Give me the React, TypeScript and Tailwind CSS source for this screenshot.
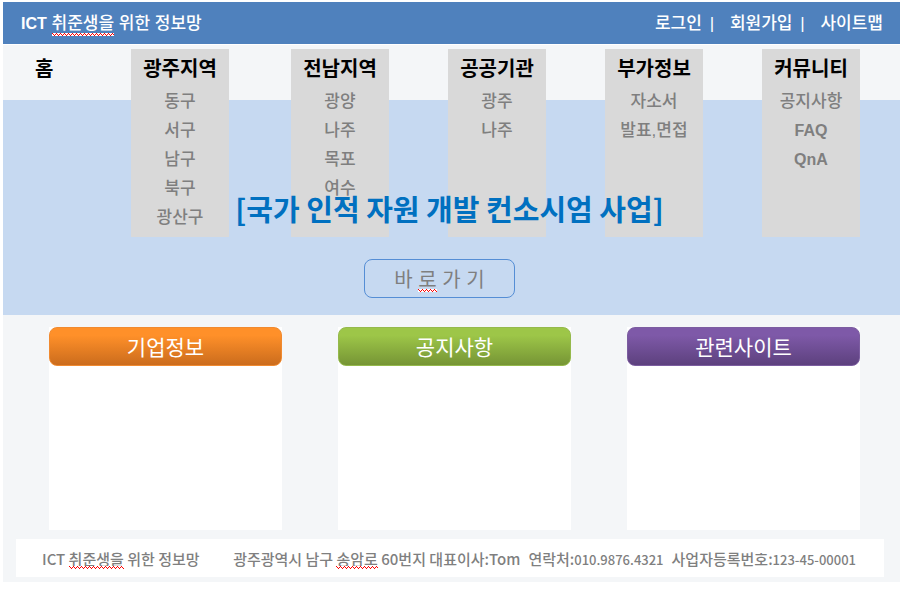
import React from "react";

type Menu = { title: string; items: string[]; className: string };

const menus: Menu[] = [
  { title: "광주지역", items: ["동구", "서구", "남구", "북구", "광산구"], className: "mr-auto" },
  { title: "전남지역", items: ["광양", "나주", "목포", "여수"], className: "" },
  { title: "공공기관", items: ["광주", "나주"], className: "" },
  { title: "부가정보", items: ["자소서", "발표,면접"], className: "" },
  { title: "커뮤니티", items: ["공지사항", "FAQ", "QnA"], className: "" },
];

const cards = [
  { title: "기업정보", tone: "border-[#f08a30] from-[#ff9029] to-[#cb6c1d]" },
  { title: "공지사항", tone: "border-[#95b94c] from-[#9dc648] to-[#769535]" },
  { title: "관련사이트", tone: "border-[#7c5da0] from-[#7e59a8] to-[#5d417e]" },
];

/* A word with the red zigzag of a spelling check under it, built from three one-pixel rows. */
function Misspelled({ children }: { children: React.ReactNode }) {
  return (
    <span className="relative inline-block">
      {children}
      <span aria-hidden="true" className="absolute inset-x-0 bottom-0 h-[3px]">
        <span className="block h-px bg-[linear-gradient(90deg,#f00_25%,#fff_25%)] bg-size-[4px_1px]" />
        <span className="block h-px bg-[linear-gradient(90deg,#fff_50%,#f00_50%)] bg-size-[2px_1px]" />
        <span className="block h-px bg-[linear-gradient(90deg,#fff_50%,#f00_50%,#f00_75%,#fff_75%)] bg-size-[4px_1px]" />
      </span>
    </span>
  );
}

export default function App() {
  return (
    <div className="bg-white px-[3px] pt-[2px] pr-[2px] font-['Liberation_Sans','Noto_Sans_CJK_KR',sans-serif]">
      <header>
        <div className="flex h-[42px] items-center justify-between bg-[#4f81bd] pt-0.5 pr-[17px] pl-[18px] text-[17px] leading-6 font-medium text-white">
          <p>
            <span className="text-base font-bold">ICT</span> <Misspelled>취준생을</Misspelled> 위한 정보망
          </p>
          <div className="flex items-center">
            <a href="#login">로그인</a>
            <span className="w-7 pr-2 text-center">|</span>
            <a href="#join">회원가입</a>
            <span className="w-7 pr-2 text-center">|</span>
            <a href="#sitemap">사이트맵</a>
          </div>
        </div>
        <nav className="mt-px flex h-[55px] bg-[#f4f6f8] pt-1 pr-10 text-xl leading-10 font-bold text-black">
          <a href="#home" className="w-32 shrink-0 pl-8">홈</a>
          <ul className="flex flex-1 gap-[59px]">
            {menus.map((menu) => (
              <li key={menu.title} className={`relative h-[38px] w-[98px] shrink-0 bg-[#d9d9d9] text-center ${menu.className}`}>
                <a href="#menu" className="whitespace-nowrap">{menu.title}</a>
                <ul className="absolute inset-x-0 top-full z-10 h-[150px] bg-[#d9d9d9] text-[17px] leading-[29px] font-medium text-[#7f7f7f]">
                  {menu.items.map((item) => (
                    <li key={item} className="h-[29px]">
                      <a href="#item" className={/^[A-Z]/.test(item) ? "text-base leading-[29px] font-bold" : ""}>{item}</a>
                    </li>
                  ))}
                </ul>
              </li>
            ))}
          </ul>
        </nav>
      </header>

      <main className="bg-[#f4f6f8]">
        <section className="flex h-[215px] flex-col items-center bg-[#c6d9f1] pt-[88px]">
          <h1 className="relative z-20 pr-1 font-['Noto_Sans_CJK_KR',sans-serif] text-[29px] leading-10 font-bold whitespace-nowrap text-[#0070c0]">
            [국가 인적 자원 개발 컨소시엄 사업]
          </h1>
          <button type="button" className="mt-[31px] mr-6 h-[39px] w-[151px] rounded-lg border border-[#558ed5] pt-0.5 text-xl leading-6 text-[#7f7f7f]">
            바 <Misspelled>로</Misspelled> 가 기
          </button>
        </section>

        <div className="grid grid-cols-3 gap-14 pt-3 pr-10 pl-[46px]">
          {cards.map((card) => (
            <section key={card.title} className="h-[203px] bg-white">
              <h2 className={`h-[39px] rounded-lg border bg-linear-to-b from-20% text-center text-[21px] leading-10 text-white ${card.tone}`}>
                {card.title}
              </h2>
            </section>
          ))}
        </div>

        <footer className="px-[13px] pt-[9px] pr-4 pb-[5px]">
          <div className="flex h-[38px] items-center gap-2 bg-white pt-0.5 pr-7 pl-[26px] font-['Noto_Sans_CJK_KR',sans-serif] text-[15px] leading-5 font-medium whitespace-nowrap text-[#7f7f7f]">
            <span className="mr-auto">ICT <Misspelled>취준생을</Misspelled> 위한 정보망</span>
            <span>광주광역시 남구 <Misspelled>송암로</Misspelled> 60번지 대표이사:Tom</span>
            <span>연락처:<span className="text-[13px]">010.9876.4321</span></span>
            <span>사업자등록번호:<span className="text-[13px]">123-45-00001</span></span>
          </div>
        </footer>
      </main>
    </div>
  );
}
